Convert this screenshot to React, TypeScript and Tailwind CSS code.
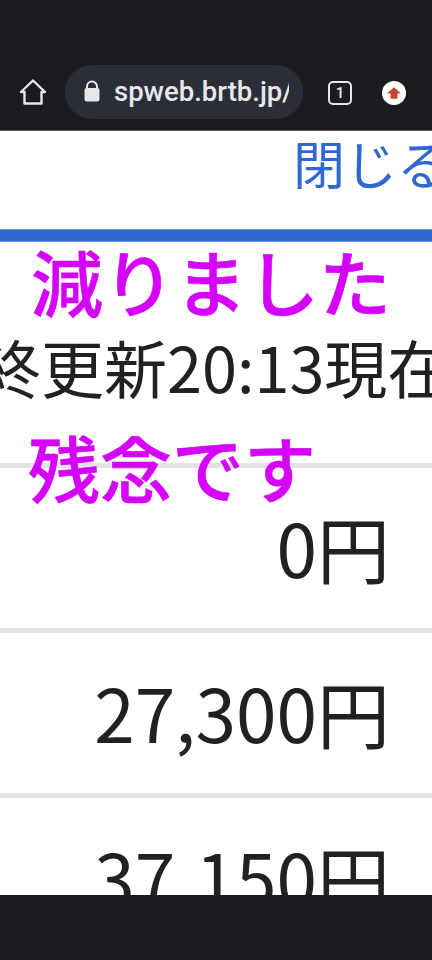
const font = "font-['Noto_Sans_CJK_JP','Noto_Sans',sans-serif]"

function Toolbar() {
    return (
        <header className="h-[131px] shrink-0 bg-[#1c1b20] border-b border-[#5f6065] flex items-end pb-[11px] pl-[19px]">
            <svg viewBox="0 0 28 28" className="h-[28px] w-[28px] mb-[13px]" fill="none" stroke="#e8e8ea" strokeWidth="2.4" strokeLinejoin="round">
                <path d="M14 2.5 L26 14 H22.5 V25.5 H5.5 V14 H2 Z" />
            </svg>
            <div className="ml-[18px] h-[54px] w-[238px] rounded-full bg-[#2c2e37] flex items-center pl-[19px] overflow-hidden">
                <svg viewBox="0 0 16 22" className="h-[22px] w-[16px] shrink-0 mb-[3px]">
                    <path d="M3 9 V6.5 a5 5 0 0 1 10 0 V9" fill="none" stroke="#e8e8ea" strokeWidth="2" />
                    <rect x="0.5" y="8" width="15" height="13.5" rx="2" fill="#e8e8ea" />
                </svg>
                <span className="ml-[14px] w-[175px] overflow-hidden whitespace-nowrap font-['Roboto',sans-serif] font-medium text-[27.5px] leading-[36px] text-[#e8e8ea]">
                    spweb.brtb.jp/
                </span>
            </div>
            <div className="ml-[25px] mb-[14px] h-[24px] w-[24px] rounded-[5px] border-2 border-[#e8e8ea] flex items-center justify-center font-['Roboto',sans-serif] font-medium text-[15px] leading-none text-[#e8e8ea]">
                1
            </div>
            <div className="ml-[30px] mb-[14px] h-[24px] w-[24px] rounded-full bg-white flex items-center justify-center">
                <svg viewBox="0 0 12 12" className="h-[14px] w-[14px]">
                    <path d="M6 1 L12 6.5 H9 V11 H3 V6.5 H0 Z" fill="#c5452f" />
                </svg>
            </div>
        </header>
    )
}

function PriceRow({ value }: { value: string }) {
    return (
        <div className="h-[165px] shrink-0 border-t-[5px] border-[#e3e3e3] flex justify-end pr-[42px] pt-[26px] text-[73px] leading-[104px] text-[#212121] whitespace-nowrap">
            {value}
        </div>
    )
}

export default function App() {
    return (
        <div className={`relative h-[960px] w-[432px] overflow-hidden flex flex-col bg-[#1c1b20] ${font}`}>
            <Toolbar />
            <main className="relative h-[764px] shrink-0 bg-white overflow-hidden">
                <div className="h-[98px] pl-[293px] whitespace-nowrap text-[52px] leading-[64px] text-[#3067d0]">
                    閉じる
                </div>
                <div className="h-[13px] bg-[#3067d0] border-y border-[#6d96e0]" />
                <div className="h-[221px] pt-[82px] ml-[-85px] whitespace-nowrap text-[63px] leading-[84px] text-[#212121]">
                    最終更新20:13現在
                </div>
                <PriceRow value="0円" />
                <PriceRow value="27,300円" />
                <PriceRow value="37,150円" />
                <div className="absolute left-[31px] top-[97px] whitespace-nowrap text-[72px] leading-[104px] font-medium [-webkit-text-stroke:0.6px_#d500f9] text-[#d500f9]">
                    減りました
                </div>
                <div className="absolute left-[28px] top-[283px] whitespace-nowrap text-[72px] leading-[104px] font-medium [-webkit-text-stroke:0.6px_#d500f9] text-[#d500f9]">
                    残念です
                </div>
            </main>
        </div>
    )
}
